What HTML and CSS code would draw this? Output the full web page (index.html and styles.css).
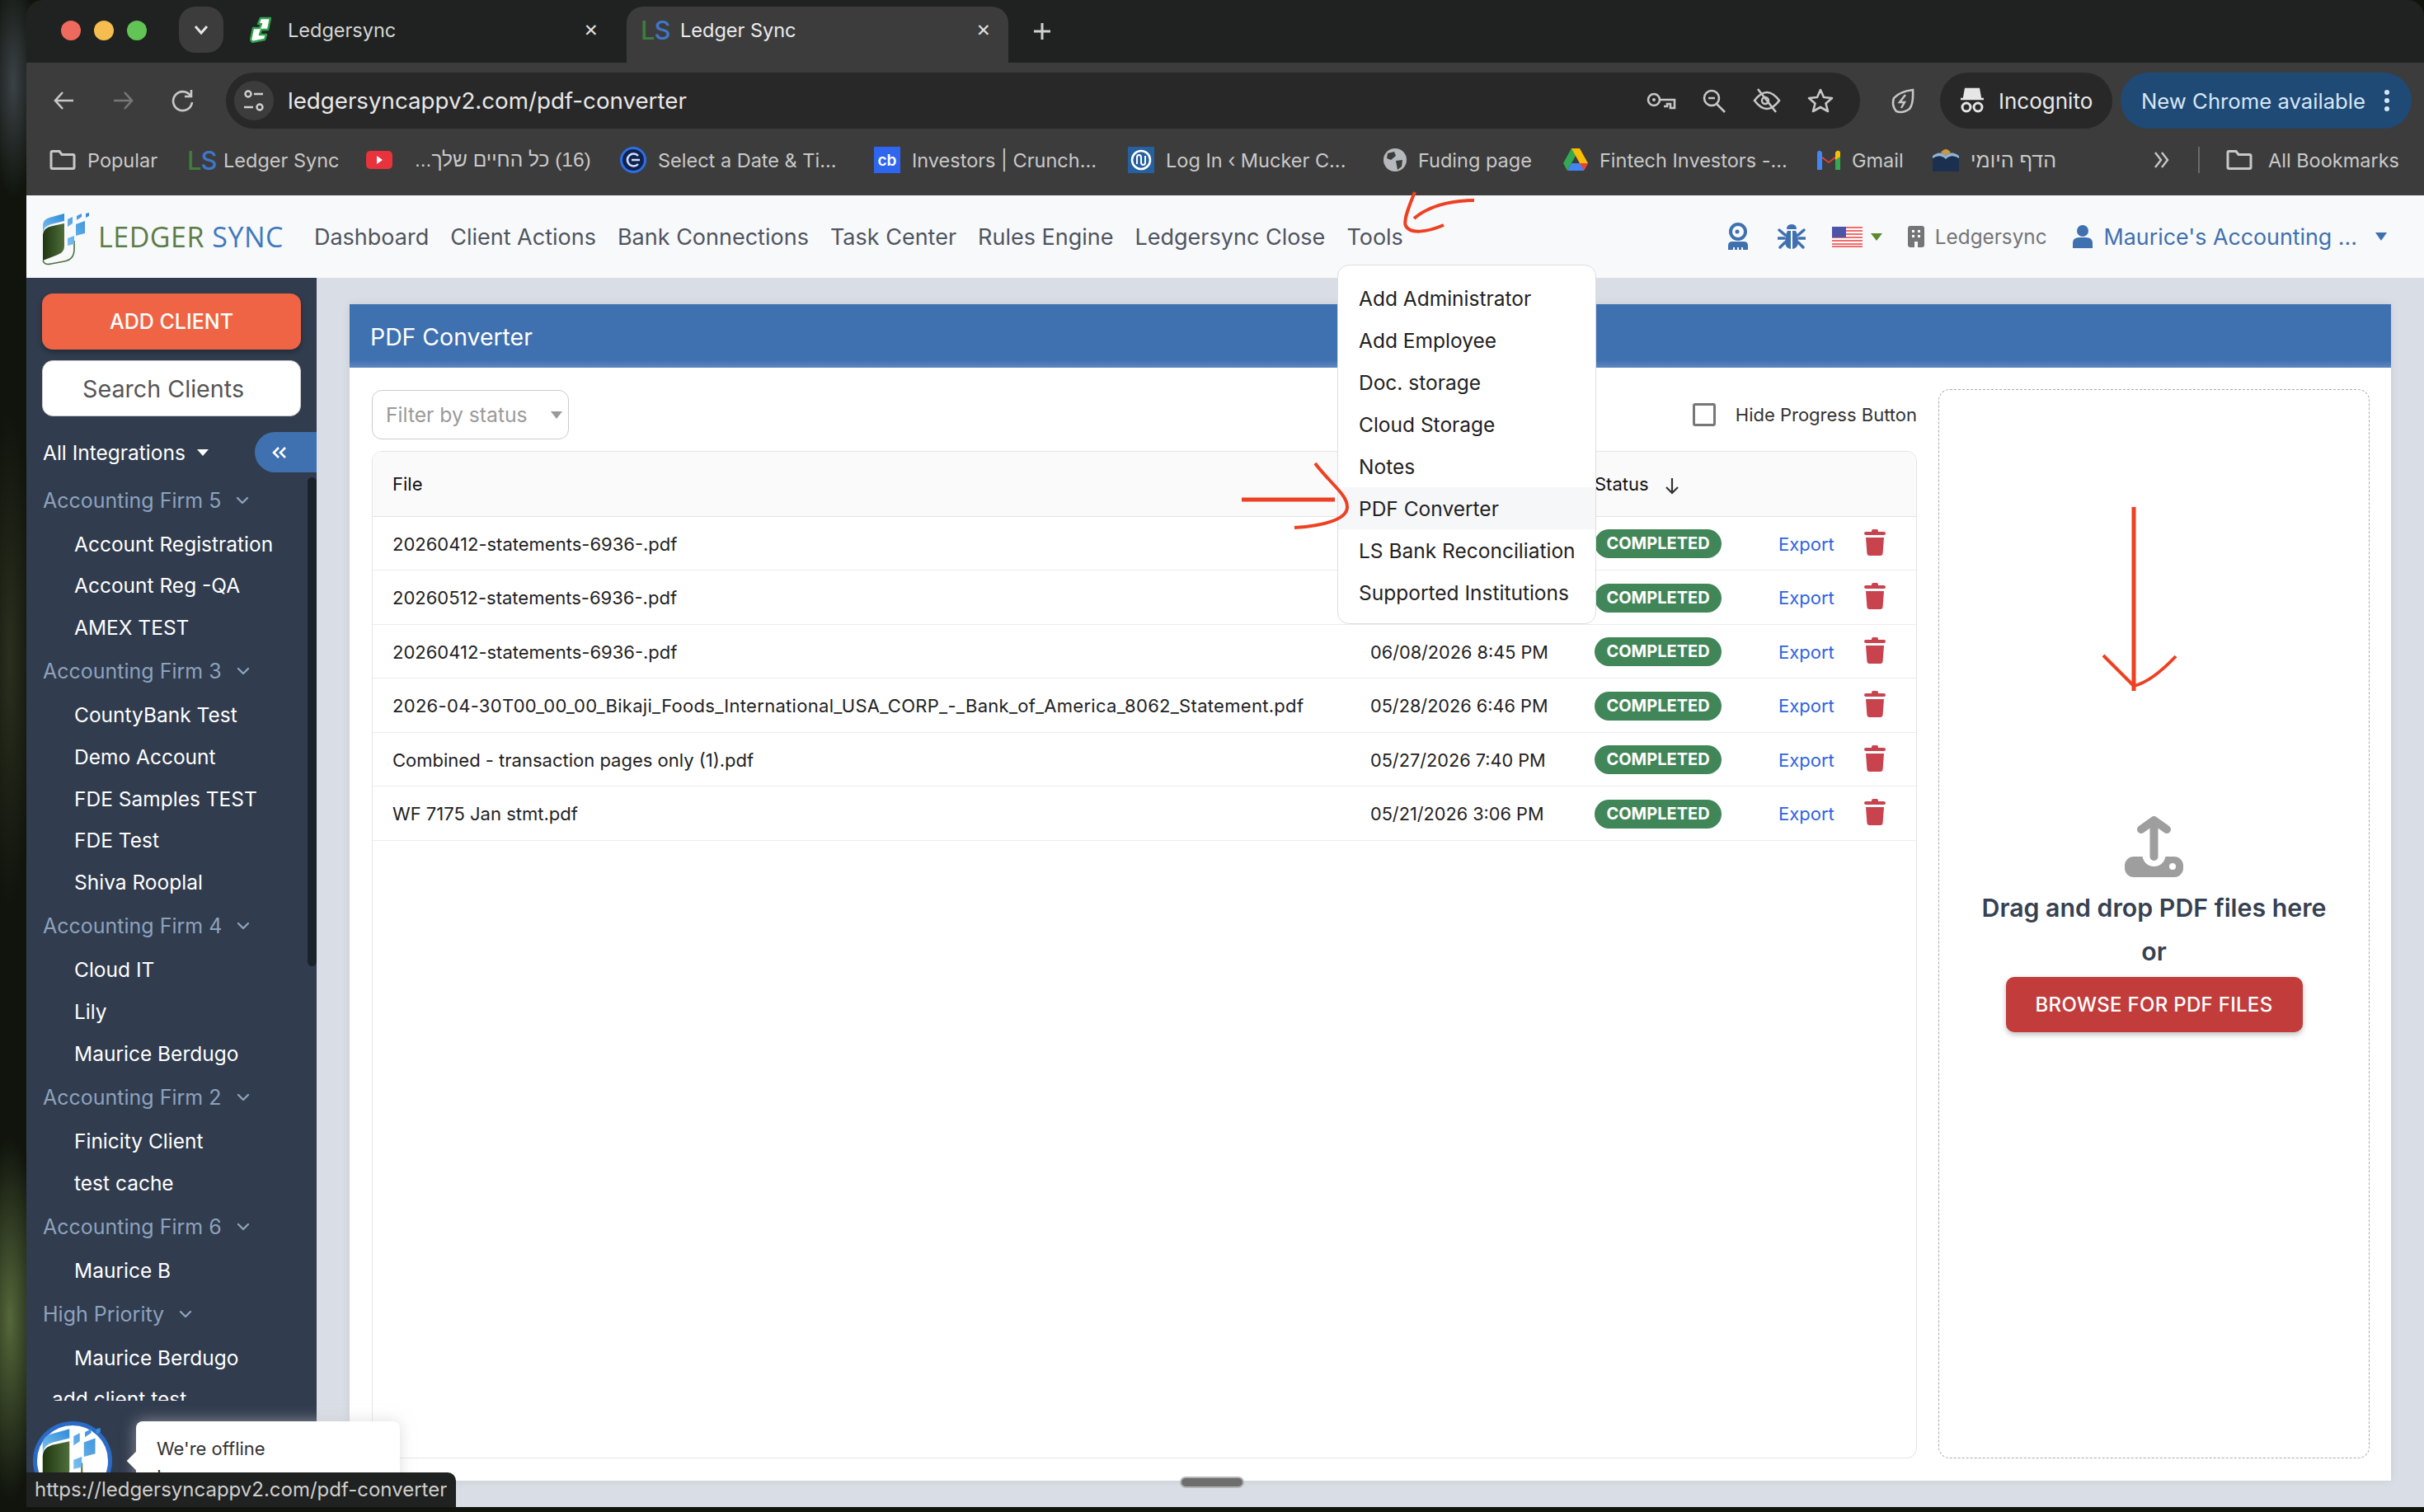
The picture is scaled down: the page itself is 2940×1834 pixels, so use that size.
FILE: index.html
```html
<!DOCTYPE html>
<html lang="en">
<head>
    <meta charset="UTF-8">
    <title>Ledger Sync - PDF Converter</title>
    <link rel="stylesheet" href="styles.css">
</head>
<body>

<svg class="defs" width="0" height="0">
    <defs>
        <linearGradient id="leaf" x1="0" x2="1" y1="0" y2="0">
            <stop offset="0" stop-color="#1f3610"/>
            <stop offset="1" stop-color="#4f6f3c"/>
        </linearGradient>
        <linearGradient id="sky" x1="0" x2="1" y1="1" y2="0">
            <stop offset="0" stop-color="#7cc0f0"/>
            <stop offset="1" stop-color="#2f8ad8"/>
        </linearGradient>
        <symbol id="logo" viewBox="0 0 62 64">
            <path d="M2 14 Q3 8 10 6 L28 1 V10 L12 14 Q4 16 2 24 Z" fill="url(#sky)"/>
            <path d="M2 58 V28 Q2 18 14 16 L28 13 V41 Q28 48 20 51 Z" fill="url(#leaf)"/>
            <path d="M2 58 Q4 64 12 62 L28 59 Q40 57 40 44 V34" fill="none" stroke="#4f6f3c" stroke-width="1.6"/>
            <path d="M32 8 L38 5 V13 L32 17 Z M43 4 L49 1 V5 L43 9 Z M54 1 L58 0 V4 L54 6 Z M42 14 L53 10 V25 L42 28 Z M32 31 L40 28 V38 L32 40 Z" fill="url(#sky)"/>
        </symbol>
        <symbol id="trash" viewBox="0 0 26 32">
            <path d="M9 2 Q9 0 11 0 H15 Q17 0 17 2 V3 H24 Q26 3 26 5 Q26 7 24 7 H2 Q0 7 0 5 Q0 3 2 3 H9 Z"/>
            <path d="M2 10 H24 L22.6 29 Q22.4 32 19.5 32 H6.5 Q3.6 32 3.4 29 Z"/>
        </symbol>
        <symbol id="folder" viewBox="0 0 32 24">
            <path d="M2 3 Q2 1.5 3.5 1.5 H12 L15 5.5 H28.5 Q30 5.5 30 7 V21 Q30 22.5 28.5 22.5 H3.5 Q2 22.5 2 21 Z" fill="none" stroke="#c7c7c7" stroke-width="3"/>
        </symbol>
        <symbol id="chevron" viewBox="0 0 16 10">
            <path d="M2 2 L8 8 L14 2" fill="none" stroke="#8da2bd" stroke-width="2.4" stroke-linecap="round" stroke-linejoin="round"/>
        </symbol>
    </defs>
</svg>

<div class="window">

    <div class="tabstrip">
        <span class="light red"></span>
        <span class="light yellow"></span>
        <span class="light green"></span>
        <div class="tabsearch">
            <svg width="20" height="14" viewBox="0 0 20 14"><path d="M3 3 L10 11 L17 3" fill="none" stroke="#e6e6e6" stroke-width="3"/></svg>
        </div>
        <div class="tab tab-first">
            <svg width="27" height="32" viewBox="0 0 27 32"><path d="M13 2 H25 L22 16 H14 L12 22 H20 L18 28 L3 31 L1 28 L4 14 H12 L14 9 H10 Z" fill="#fff" stroke="#2fa24f" stroke-width="2.4" stroke-linejoin="round"/></svg>
            <span class="tab-title">Ledgersync</span>
            <span class="tab-close">✕</span>
        </div>
        <div class="tab tab-active">
            <span class="ls-mark"><i>L</i><b>S</b></span>
            <span class="tab-title">Ledger Sync</span>
            <span class="tab-close">✕</span>
        </div>
        <svg class="newtab" width="24" height="24" viewBox="0 0 24 24"><path d="M12 2 V22 M2 12 H22" stroke="#d0d0d0" stroke-width="3"/></svg>
    </div>

    <div class="toolbar">
        <svg class="tool" width="32" height="32" viewBox="0 0 32 32"><path d="M27 16 H5 M14 6 L5 16 L14 26" fill="none" stroke="#c7c7c7" stroke-width="2.6"/></svg>
        <svg class="tool" width="32" height="32" viewBox="0 0 32 32"><path d="M5 16 H27 M18 6 L27 16 L18 26" fill="none" stroke="#777" stroke-width="2.6"/></svg>
        <svg class="tool" width="32" height="32" viewBox="0 0 32 32"><path d="M25 10 A11.5 11.5 0 1 0 27 18 M26 3 V11 H18" fill="none" stroke="#c7c7c7" stroke-width="2.6"/></svg>
        <div class="urlbar">
            <div class="urlchip">
                <svg width="28" height="32" viewBox="0 0 28 32"><circle cx="7" cy="8" r="3.5" fill="none" stroke="#d0d0d0" stroke-width="2.4"/><path d="M14 8 H25 M2 24 H13" stroke="#d0d0d0" stroke-width="2.4"/><circle cx="21" cy="24" r="3.5" fill="none" stroke="#d0d0d0" stroke-width="2.4"/></svg>
            </div>
            <span class="url">ledgersyncappv2.com/pdf-converter</span>
            <div class="urlicons">
                <svg width="36" height="24" viewBox="0 0 36 24"><circle cx="9" cy="11" r="7" fill="none" stroke="#c7c7c7" stroke-width="2.6"/><circle cx="9" cy="11" r="2" fill="#c7c7c7"/><path d="M16 11 H34 V21 H29 V16 H25 V19 H21" fill="none" stroke="#c7c7c7" stroke-width="2.6"/></svg>
                <svg width="30" height="30" viewBox="0 0 30 30"><circle cx="12" cy="12" r="9" fill="none" stroke="#c7c7c7" stroke-width="2.6"/><path d="M8 12 H16 M18 19 L28 29" stroke="#c7c7c7" stroke-width="2.6"/></svg>
                <svg width="36" height="32" viewBox="0 0 36 32"><path d="M3 16 Q18 -4 33 16 Q18 36 3 16 Z" fill="none" stroke="#c7c7c7" stroke-width="2.6"/><path d="M7 2 L29 30" stroke="#c7c7c7" stroke-width="2.6"/><circle cx="16" cy="16" r="4" fill="none" stroke="#c7c7c7" stroke-width="2.4"/></svg>
                <svg width="32" height="32" viewBox="0 0 32 32"><path d="M16 3 L20 12 L30 13 L22.5 19.5 L25 29 L16 24 L7 29 L9.5 19.5 L2 13 L12 12 Z" fill="none" stroke="#c7c7c7" stroke-width="2.6" stroke-linejoin="round"/></svg>
            </div>
        </div>
        <svg class="ext" width="32" height="32" viewBox="0 0 32 32"><path d="M28 3 Q29 20 24 26 Q16 32 8 29 Q2 22 5 13 Q12 5 28 3 Z" fill="none" stroke="#c7c7c7" stroke-width="2.6"/><path d="M19 9 L12 18 H18 L14 25" fill="none" stroke="#c7c7c7" stroke-width="2.4"/></svg>
        <div class="pill pill-dark">
            <svg width="30" height="32" viewBox="0 0 30 32"><path d="M7 2 H23 L25 13 H5 Z M1 14 H29" fill="#e6e6e6" stroke="#e6e6e6" stroke-width="2.4"/><circle cx="8" cy="24" r="5" fill="none" stroke="#e6e6e6" stroke-width="3"/><circle cx="22" cy="24" r="5" fill="none" stroke="#e6e6e6" stroke-width="3"/></svg>
            <span>Incognito</span>
        </div>
        <div class="pill pill-blue">
            <span>New Chrome available</span>
            <svg width="8" height="28" viewBox="0 0 8 28"><circle cx="4" cy="4" r="3" fill="#d6e6f7"/><circle cx="4" cy="14" r="3" fill="#d6e6f7"/><circle cx="4" cy="24" r="3" fill="#d6e6f7"/></svg>
        </div>
    </div>

    <div class="bookmarks">
        <div class="bm"><svg width="32" height="24"><use href="#folder"/></svg><span>Popular</span></div>
        <div class="bm"><span class="ls-mark"><i>L</i><b>S</b></span><span>Ledger Sync</span></div>
        <div class="bm">
            <svg width="32" height="22" viewBox="0 0 32 22"><rect width="32" height="22" rx="5" fill="#e8323c"/><path d="M13 6 L20 11 L13 16 Z" fill="#fff"/></svg>
            <span class="he he-yt" dir="rtl">(16) כל החיים שלך...</span>
        </div>
        <div class="bm">
            <svg width="32" height="32" viewBox="0 0 32 32"><circle cx="16" cy="16" r="14.5" fill="#10224e" stroke="#2c6fe8" stroke-width="3"/><path d="M22 11 A7.5 7.5 0 1 0 22 21 M14 16 H24" fill="none" stroke="#cfe0ff" stroke-width="2.6"/></svg>
            <span>Select a Date &amp; Ti...</span>
        </div>
        <div class="bm"><span class="cb-mark">cb</span><span>Investors | Crunch...</span></div>
        <div class="bm">
            <svg width="32" height="32" viewBox="0 0 32 32"><rect width="32" height="32" fill="#27609f"/><circle cx="16" cy="16" r="11" fill="none" stroke="#fff" stroke-width="2.6"/><path d="M11 21 V13 Q11 10 13.5 10 T16 13 V19 Q16 22 18.5 22 T21 19 V11" fill="none" stroke="#fff" stroke-width="2"/></svg>
            <span>Log In ‹ Mucker C...</span>
        </div>
        <div class="bm">
            <svg width="28" height="28" viewBox="0 0 28 28"><circle cx="14" cy="14" r="14" fill="#b5b8bc"/><path d="M5 6 L13 4 L15 9 L9 14 L4 12 Z M15 15 L23 14 L22 22 L17 26 Z" fill="#3c3c3c"/></svg>
            <span>Fuding page</span>
        </div>
        <div class="bm">
            <svg width="30" height="28" viewBox="0 0 30 28"><path d="M10 0 H20 L10 18 L5 27 L0 18 Z" fill="#34a853"/><path d="M10 0 H20 L30 18 H20 Z" fill="#fbbc04"/><path d="M5 27 L10 18 H30 L25 27 Z" fill="#4285f4"/><path d="M20 18 H30 L25 27 Z" fill="#ea4335"/></svg>
            <span>Fintech Investors -...</span>
        </div>
        <div class="bm">
            <svg width="28" height="24" viewBox="0 0 28 24"><path d="M0 3 L14 14 L28 3 V24 H22 V10 L14 16 L6 10 V24 H0 Z" fill="#ea4335"/><path d="M0 3 Q1 0 4 1 L6 3 V24 H0 Z" fill="#4285f4"/><path d="M22 3 L24 1 Q27 0 28 3 V24 H22 Z" fill="#34a853"/><path d="M22 3 L24 1 Q27 0 28 3 V8 L22 12 Z" fill="#fbbc04"/></svg>
            <span>Gmail</span>
        </div>
        <div class="bm">
            <svg width="32" height="28" viewBox="0 0 32 28"><rect y="8" width="32" height="20" fill="#1b2f4e"/><path d="M0 9 Q9 2 16 9 Q23 2 32 9 V12 Q23 6 16 13 Q9 6 0 12 Z" fill="#8fb4d8"/><path d="M10 5 Q16 -3 22 5 L16 9 Z" fill="#c69a4b"/></svg>
            <span class="he" dir="rtl">הדף היומי</span>
        </div>
        <svg class="more" width="20" height="24" viewBox="0 0 20 24"><path d="M3 3 L10 12 L3 21 M11 3 L18 12 L11 21" fill="none" stroke="#c7c7c7" stroke-width="2.4"/></svg>
        <span class="bm-sep"></span>
        <div class="bm bm-all"><svg width="32" height="24"><use href="#folder"/></svg><span>All Bookmarks</span></div>
    </div>

    <nav class="navbar">
        <svg class="nav-logo" width="62" height="64"><use href="#logo"/></svg>
        <div class="brand"><span class="brand-a">LEDGER</span> <span class="brand-b">SYNC</span></div>
        <div class="nav-links">
            <a>Dashboard</a>
            <a>Client Actions</a>
            <a>Bank Connections</a>
            <a>Task Center</a>
            <a>Rules Engine</a>
            <a>Ledgersync Close</a>
            <a>Tools</a>
        </div>
        <div class="nav-right">
            <svg width="26" height="34" viewBox="0 0 26 34"><circle cx="13" cy="11" r="9" fill="none" stroke="#3f70b0" stroke-width="4"/><circle cx="12" cy="11" r="2.5" fill="#3f70b0"/><path d="M1 33 V28 Q1 23 6 23 H20 Q25 23 25 28 V33 H19 V30 H17 V33 H14 V30 H12 V33 H9 V30 H7 V33 Z" fill="#3f70b0"/></svg>
            <svg class="nav-bug" width="34" height="32" viewBox="0 0 34 32"><path d="M11 7 Q11 1 17 1 Q23 1 23 7 Z M12 9 H16 V31 Q10 30 9 24 Q9 14 12 9 Z M18 9 H22 Q25 14 25 24 Q24 30 18 31 Z" fill="#3f70b0"/><path d="M9 14 L2 8 M8 18 H1 M9 23 L3 29 M25 14 L32 8 M26 18 H33 M25 23 L31 29" stroke="#3f70b0" stroke-width="3.4" stroke-linecap="round"/></svg>
            <div class="flag">
                <svg width="37" height="25" viewBox="0 0 37 25">
                    <rect width="37" height="25" fill="#fff"/>
                    <path d="M0 1 H37 M0 5 H37 M0 9 H37 M0 13 H37 M0 17 H37 M0 21 H37 M0 24 H37" stroke="#f26d6d" stroke-width="2"/>
                    <rect width="17" height="13" fill="#4c55a8"/>
                </svg>
                <span class="caret caret-green"></span>
            </div>
            <div class="org">
                <svg width="20" height="26" viewBox="0 0 20 26"><rect width="20" height="26" rx="3" fill="#757575"/><path d="M5 5 H8 V8 H5 Z M12 5 H15 V8 H12 Z M5 11 H8 V14 H5 Z M12 11 H15 V14 H12 Z M8 19 H12 V26 H8 Z" fill="#f8f9fb"/></svg>
                <span>Ledgersync</span>
            </div>
            <div class="account">
                <svg width="24" height="28" viewBox="0 0 24 28"><circle cx="12" cy="7" r="7" fill="#3f70b0"/><path d="M0 28 V22 Q0 15 8 15 H16 Q24 15 24 22 V28 Z" fill="#3f70b0"/></svg>
                <span>Maurice's Accounting ...</span>
                <span class="caret caret-blue"></span>
            </div>
        </div>
    </nav>

    <div class="app">
        <aside class="sidebar">
            <button class="add-client">ADD CLIENT</button>
            <div class="search-clients">Search Clients</div>
            <div class="integrations">
                <span>All Integrations</span>
                <span class="caret caret-white"></span>
                <div class="collapse">
                    <svg width="20" height="16" viewBox="0 0 20 16"><path d="M9 2 L3 8 L9 14 M17 2 L11 8 L17 14" fill="none" stroke="#fff" stroke-width="2.6"/></svg>
                </div>
            </div>
            <div class="client-list">
                <div class="firm">Accounting Firm 5 <svg width="16" height="10"><use href="#chevron"/></svg></div>
                <div class="client">Account Registration</div>
                <div class="client">Account Reg -QA</div>
                <div class="client">AMEX TEST</div>
                <div class="firm">Accounting Firm 3 <svg width="16" height="10"><use href="#chevron"/></svg></div>
                <div class="client">CountyBank Test</div>
                <div class="client">Demo Account</div>
                <div class="client">FDE Samples TEST</div>
                <div class="client">FDE Test</div>
                <div class="client">Shiva Rooplal</div>
                <div class="firm">Accounting Firm 4 <svg width="16" height="10"><use href="#chevron"/></svg></div>
                <div class="client">Cloud IT</div>
                <div class="client">Lily</div>
                <div class="client">Maurice Berdugo</div>
                <div class="firm">Accounting Firm 2 <svg width="16" height="10"><use href="#chevron"/></svg></div>
                <div class="client">Finicity Client</div>
                <div class="client">test cache</div>
                <div class="firm">Accounting Firm 6 <svg width="16" height="10"><use href="#chevron"/></svg></div>
                <div class="client">Maurice B</div>
                <div class="firm">High Priority <svg width="16" height="10"><use href="#chevron"/></svg></div>
                <div class="client">Maurice Berdugo</div>
                <div class="client client-flat">add client test</div>
            </div>
            <div class="scroll-thumb"></div>
        </aside>

        <main class="main">
            <section class="card">
                <header class="card-head">PDF Converter</header>
                <div class="card-body">
                    <div class="files">
                        <div class="files-top">
                            <div class="filter">
                                <span>Filter by status</span>
                                <span class="caret caret-grey"></span>
                            </div>
                            <label class="hide-progress">
                                <span class="checkbox"></span>
                                Hide Progress Button
                            </label>
                        </div>
                        <div class="table-wrap">
                            <table class="file-table">
                                <colgroup>
                                    <col class="col-file">
                                    <col class="col-date">
                                    <col class="col-status">
                                    <col class="col-export">
                                    <col>
                                </colgroup>
                                <thead>
                                    <tr>
                                        <th>File</th>
                                        <th></th>
                                        <th>
                                            Status
                                            <svg class="sort" width="18" height="22" viewBox="0 0 18 22"><path d="M9 2 V20 M2 13 L9 20 L16 13" fill="none" stroke="#333" stroke-width="2.2"/></svg>
                                        </th>
                                        <th></th>
                                        <th></th>
                                    </tr>
                                </thead>
                                <tbody>
                                    <tr>
                                        <td>20260412-statements-6936-.pdf</td>
                                        <td></td>
                                        <td><span class="badge">COMPLETED</span></td>
                                        <td><a class="export">Export</a></td>
                                        <td><svg class="trash" width="26" height="32"><use href="#trash"/></svg></td>
                                    </tr>
                                    <tr>
                                        <td>20260512-statements-6936-.pdf</td>
                                        <td></td>
                                        <td><span class="badge">COMPLETED</span></td>
                                        <td><a class="export">Export</a></td>
                                        <td><svg class="trash" width="26" height="32"><use href="#trash"/></svg></td>
                                    </tr>
                                    <tr>
                                        <td>20260412-statements-6936-.pdf</td>
                                        <td class="date">06/08/2026 8:45 PM</td>
                                        <td><span class="badge">COMPLETED</span></td>
                                        <td><a class="export">Export</a></td>
                                        <td><svg class="trash" width="26" height="32"><use href="#trash"/></svg></td>
                                    </tr>
                                    <tr>
                                        <td class="long-name">2026-04-30T00_00_00_Bikaji_Foods_International_USA_CORP_-_Bank_of_America_8062_Statement.pdf</td>
                                        <td class="date">05/28/2026 6:46 PM</td>
                                        <td><span class="badge">COMPLETED</span></td>
                                        <td><a class="export">Export</a></td>
                                        <td><svg class="trash" width="26" height="32"><use href="#trash"/></svg></td>
                                    </tr>
                                    <tr>
                                        <td>Combined - transaction pages only (1).pdf</td>
                                        <td class="date">05/27/2026 7:40 PM</td>
                                        <td><span class="badge">COMPLETED</span></td>
                                        <td><a class="export">Export</a></td>
                                        <td><svg class="trash" width="26" height="32"><use href="#trash"/></svg></td>
                                    </tr>
                                    <tr>
                                        <td>WF 7175 Jan stmt.pdf</td>
                                        <td class="date">05/21/2026 3:06 PM</td>
                                        <td><span class="badge">COMPLETED</span></td>
                                        <td><a class="export">Export</a></td>
                                        <td><svg class="trash" width="26" height="32"><use href="#trash"/></svg></td>
                                    </tr>
                                </tbody>
                            </table>
                        </div>
                    </div>
                    <div class="dropzone">
                        <svg class="upload" width="71" height="75" viewBox="0 0 71 75">
                            <rect y="50" width="71" height="25" rx="11" fill="#9e9e9e"/>
                            <circle cx="35.5" cy="48" r="14" fill="#fff"/>
                            <path d="M35.5 50 V6 M20 17 L35.5 6 L51 17" fill="none" stroke="#9e9e9e" stroke-width="10" stroke-linecap="round" stroke-linejoin="round"/>
                            <circle cx="58" cy="62" r="4" fill="#fff"/>
                        </svg>
                        <p class="drop-title">Drag and drop PDF files here</p>
                        <p class="drop-or">or</p>
                        <button class="browse">BROWSE FOR PDF FILES</button>
                    </div>
                </div>
            </section>
        </main>
    </div>

    <ul class="tools-menu">
        <li>Add Administrator</li>
        <li>Add Employee</li>
        <li>Doc. storage</li>
        <li>Cloud Storage</li>
        <li>Notes</li>
        <li class="current">PDF Converter</li>
        <li>LS Bank Reconciliation</li>
        <li>Supported Institutions</li>
    </ul>

    <div class="chat-bubble">
        <svg width="78" height="80"><use href="#logo"/></svg>
    </div>
    <div class="chat-note">
        <p>We're offline</p>
        <p>Leave a message</p>
    </div>
    <div class="status-link">https://ledgersyncappv2.com/pdf-converter</div>
    <div class="resize-handle"></div>
</div>

<!-- red marks drawn on top of the screenshot -->
<svg class="marks" width="2940" height="1834" viewBox="0 0 2940 1834">
    <g fill="none" stroke="#ee4022" stroke-width="4">
        <path d="M1716 233 C1708 252 1702 268 1705 274 C1710 284 1730 282 1751 273"/>
        <path d="M1715 265 C1730 252 1755 243 1788 243"/>
        <path d="M1506 606 H1619" stroke-width="5"/>
        <path d="M1595 562 C1615 588 1634 600 1634 615 C1634 630 1605 638 1570 640"/>
        <path d="M2588 615 V838" stroke-width="5"/>
        <path d="M2551 795 L2588 832 C2605 828 2622 814 2639 796"/>
    </g>
</svg>

</body>
</html>
```

FILE: styles.css
```css
* {
    box-sizing: border-box;
}
html, body {
    margin: 0;
    height: 100%;
}
body {
    position: relative;
    width: 2940px;
    height: 1834px;
    overflow: hidden;
    font-family: Inter, "Liberation Sans", sans-serif;
    background-color: #10140d;
    background-image:
        radial-gradient(ellipse 40px 220px at 12px 1600px, #55683a, transparent),
        radial-gradient(ellipse 30px 140px at 16px 100px, #3b4247, transparent),
        radial-gradient(ellipse 30px 300px at 12px 800px, #2a2f1e, transparent);
}
.defs {
    position: absolute;
}
.marks {
    position: absolute;
    top: 0;
    left: 0;
    pointer-events: none;
}
.window {
    position: relative;
    display: flex;
    flex-direction: column;
    width: 2908px;
    height: 1828px;
    margin-left: 32px;
    border-radius: 20px 20px 0 0;
    overflow: hidden;
    background-color: #202221;
}

/* browser chrome */
.tabstrip {
    display: flex;
    align-items: flex-end;
    height: 76px;
    padding-left: 42px;
}
.light {
    width: 24px;
    height: 24px;
    margin: 0 16px 27px 0;
    border-radius: 50%;
}
.red { background-color: #ee6a5f; }
.yellow { background-color: #f5bd4f; }
.green { background-color: #61c454; }
.tabsearch {
    display: flex;
    align-items: center;
    justify-content: center;
    width: 54px;
    height: 56px;
    margin: 0 14px 12px 23px;
    border-radius: 20px;
    background-color: #3c3c3c;
}
.tab {
    display: flex;
    align-items: center;
    height: 68px;
    padding-bottom: 12px;
    color: #d6d6d6;
    font-size: 23.5px;
}
.tab-first {
    width: 475px;
    padding-left: 18px;
}
.tab-first .tab-title {
    margin-left: 19px;
}
.tab-first .tab-close {
    margin-right: 34px;
}
.tab-active {
    width: 463px;
    padding-left: 17px;
    border-radius: 20px 20px 0 0;
    background-color: #3c3c3c;
    color: #ececec;
}
.tab-active .tab-title {
    margin-left: 18px;
}
.tab-close {
    margin-left: auto;
    margin-right: 21px;
    font-size: 21px;
    color: #e0e0e0;
}
.newtab {
    margin: 0 0 26px 29px;
}
.ls-mark {
    display: inline-flex;
    width: 30px;
    font-size: 31px;
    line-height: 1;
    font-weight: 500;
    letter-spacing: -1px;
}
.ls-mark i {
    font-style: normal;
    color: #3f7d3c;
}
.ls-mark b {
    font-weight: 500;
    color: #3f77c8;
}
.toolbar {
    display: flex;
    align-items: center;
    height: 80px;
    padding: 12px 0 0 30px;
    background-color: #3c3c3c;
}
.tool {
    flex: none;
    margin-right: 39px;
}
.tool:nth-child(2) {
    margin-right: 41px;
}
.tool:nth-child(3) {
    margin-right: 36px;
}
.urlbar {
    display: flex;
    align-items: center;
    flex: none;
    width: 1982px;
    height: 68px;
    padding-left: 10px;
    border-radius: 34px;
    background-color: #282828;
}
.urlchip {
    display: flex;
    align-items: center;
    justify-content: center;
    width: 48px;
    height: 48px;
    border-radius: 50%;
    background-color: #3c3c3c;
}
.url {
    margin-left: 17px;
    font-size: 27.7px;
    color: #e8e8e8;
}
.urlicons {
    display: flex;
    align-items: center;
    gap: 31px;
    margin-left: auto;
    padding-right: 32px;
}
.ext {
    flex: none;
    margin-left: 36px;
}
.pill {
    display: flex;
    align-items: center;
    flex: none;
    height: 68px;
    border-radius: 34px;
    font-size: 26px;
}
.pill-dark {
    width: 209px;
    margin-left: 29px;
    padding-left: 24px;
    gap: 17px;
    background-color: #282828;
    color: #e8e8e8;
}
.pill-blue {
    width: 353px;
    margin-left: 10px;
    padding-left: 25px;
    gap: 22px;
    background-color: #1f4a75;
    color: #d6e6f7;
    font-size: 25.7px;
}
.bookmarks {
    display: grid;
    grid-template-columns: 167px 217px 308px 308px 308px 310px 218px 308px 140px 252px 50px 54px auto;
    align-items: center;
    height: 81px;
    padding: 0 0 5px 28px;
    background-color: #3c3c3c;
    font-size: 23.5px;
    color: #c9c9c9;
}
.bm {
    display: flex;
    align-items: center;
    gap: 14px;
    white-space: nowrap;
}
.bm-all {
    gap: 19px;
}
.bm .he {
    font-family: "Liberation Sans", sans-serif;
    font-size: 25px;
}
.bm .he-yt {
    margin-left: 13px;
    font-size: 24.5px;
}
.cb-mark {
    display: flex;
    align-items: center;
    justify-content: center;
    width: 32px;
    height: 32px;
    background-color: #2f66f0;
    color: #fff;
    font-size: 19px;
    font-weight: 600;
}
.more {
    justify-self: center;
}
.bm-sep {
    justify-self: start;
    width: 2px;
    height: 32px;
    margin-left: 20px;
    background-color: #6a6a6a;
}

/* app header */
.navbar {
    display: flex;
    align-items: center;
    height: 100px;
    padding-left: 18px;
    background-color: #f8f9fb;
}
.nav-logo {
    flex: none;
    margin-top: 6px;
}
.brand {
    margin-left: 7px;
    font-family: "Open Sans", sans-serif;
    font-size: 34px;
    letter-spacing: 0.5px;
    white-space: nowrap;
}
.brand-a { color: #5c7d47; }
.brand-b { color: #3f78bd; }
.nav-links {
    display: flex;
    gap: 26px;
    margin-left: 37px;
    font-size: 27px;
    color: #4f5560;
    white-space: nowrap;
}
.nav-right {
    display: flex;
    align-items: center;
    margin-left: auto;
    padding-right: 45px;
    font-size: 24.3px;
    white-space: nowrap;
}
.nav-bug {
    margin-left: 35px;
}
.flag {
    display: flex;
    align-items: center;
    gap: 10px;
    margin-left: 32px;
}
.org {
    display: flex;
    align-items: center;
    gap: 13px;
    margin-left: 31px;
    color: #757575;
}
.account {
    display: flex;
    align-items: center;
    gap: 14px;
    margin-left: 31px;
    font-size: 26.8px;
    color: #3f70b0;
}
.account .caret {
    margin-left: 8px;
}
.caret {
    display: inline-block;
    width: 0;
    height: 0;
    border-left: 7px solid transparent;
    border-right: 7px solid transparent;
}
.caret-green { border-top: 9px solid #5c8a2e; }
.caret-blue { border-top: 10px solid #3f70b0; }
.caret-white { border-top: 8px solid #fff; }
.caret-grey { border-top: 9px solid #9a9a9a; }

/* sidebar */
.app {
    display: flex;
    flex: 1;
    min-height: 0;
}
.sidebar {
    position: relative;
    flex: none;
    width: 352px;
    padding-top: 19px;
    background-color: #313c4e;
}
.add-client {
    display: block;
    width: 314px;
    height: 68px;
    margin-left: 19px;
    border: none;
    border-radius: 13px;
    background-color: #ee6444;
    box-shadow: 0 3px 6px rgba(0, 0, 0, 0.3);
    color: white;
    font-family: inherit;
    font-size: 25px;
    font-weight: 500;
}
.search-clients {
    display: flex;
    align-items: center;
    width: 314px;
    height: 68px;
    margin: 13px 0 19px 19px;
    padding-left: 48px;
    border: 1px solid #ccc;
    border-radius: 13px;
    background-color: white;
    color: #555;
    font-size: 28.7px;
}
.integrations {
    display: flex;
    align-items: center;
    height: 49px;
    padding-left: 20px;
    color: white;
    font-size: 24.5px;
}
.integrations .caret {
    margin-left: 14px;
}
.collapse {
    display: flex;
    align-items: center;
    justify-content: center;
    width: 75px;
    height: 49px;
    margin-left: auto;
    padding-right: 16px;
    border-radius: 25px 0 0 25px;
    background-color: #3f70b0;
}
.client-list {
    height: 1120px;
    margin-top: 6px;
    overflow: hidden;
    font-size: 24.5px;
}
.firm {
    display: flex;
    align-items: center;
    gap: 18px;
    height: 55.3px;
    padding-left: 20px;
    font-size: 25px;
    color: #8da2bd;
}
.client {
    display: flex;
    align-items: center;
    height: 50.75px;
    padding-left: 58px;
    color: white;
}
.client-flat {
    padding-left: 31px;
}
.scroll-thumb {
    position: absolute;
    top: 242px;
    right: 0;
    width: 11px;
    height: 593px;
    border-radius: 6px;
    background-color: #1a222c;
}

/* main card */
.main {
    flex: 1;
    min-width: 0;
    padding: 32px 40px;
    background-color: #d9dde5;
}
.card {
    display: flex;
    flex-direction: column;
    height: 100%;
    background-color: white;
    box-shadow: 0 0 10px rgba(0, 0, 0, 0.08);
}
.card-head {
    display: flex;
    align-items: center;
    flex: none;
    height: 77px;
    padding: 2px 0 0 25px;
    background: linear-gradient(#3f70b0 88%, #5f88be);
    color: white;
    font-size: 28.4px;
}
.card-body {
    display: flex;
    flex: 1;
    gap: 26px;
    min-height: 0;
    padding: 26px 26px 27px 27px;
}
.files {
    display: flex;
    flex-direction: column;
    flex: none;
    width: 1874px;
}
.files-top {
    display: flex;
    align-items: center;
    flex: none;
    height: 60px;
    margin: 1px 0 14px;
}
.filter {
    display: flex;
    align-items: center;
    justify-content: space-between;
    width: 239px;
    height: 60px;
    padding: 0 7px 0 16px;
    border: 1px solid #ccc;
    border-radius: 12px;
    color: #9a9a9a;
    font-size: 24.7px;
}
.hide-progress {
    display: flex;
    align-items: center;
    gap: 24px;
    margin: 0 0 1px auto;
    font-size: 22px;
    color: #333;
}
.checkbox {
    width: 28px;
    height: 28px;
    border: 3px solid #777;
    border-radius: 3px;
}
.table-wrap {
    flex: 1;
    border: 1px solid #e4e4e4;
    border-radius: 12px;
    overflow: hidden;
}
.file-table {
    width: 100%;
    table-layout: fixed;
    border-collapse: collapse;
    font-size: 22px;
    color: #222;
}
.col-file { width: 1186px; }
.col-date { width: 272px; }
.col-status { width: 223px; }
.col-export { width: 117px; }
.file-table th {
    height: 78px;
    padding: 0 0 0 24px;
    border-bottom: 1px solid #e4e4e4;
    background-color: #fafafa;
    text-align: left;
    font-weight: 400;
    color: #111;
    white-space: nowrap;
}
.file-table td {
    height: 65.5px;
    padding: 2px 0 0 24px;
    border-bottom: 1px solid #ececec;
    white-space: nowrap;
}
.file-table td:last-child {
    padding-left: 11px;
}
.file-table .date {
    font-size: 21.7px;
}
.file-table .long-name {
    letter-spacing: 0.3px;
}
.sort {
    margin-left: 13px;
    vertical-align: middle;
}
.badge {
    display: inline-block;
    width: 154px;
    height: 35px;
    border-radius: 18px;
    background-color: #418659;
    color: white;
    font-size: 20px;
    font-weight: 700;
    line-height: 35px;
    text-align: center;
    vertical-align: middle;
}
.export {
    color: #2f64e0;
}
.trash {
    display: block;
    margin-top: -4px;
    fill: #c9434e;
}

/* upload box */
.dropzone {
    display: flex;
    flex-direction: column;
    align-items: center;
    justify-content: center;
    flex: none;
    width: 523px;
    border: 1px dashed #aaa;
    border-radius: 14px;
}
.upload {
    flex: none;
}
.drop-title {
    margin: 17px 0 0;
    color: #374151;
    font-size: 30.3px;
    font-weight: 600;
    line-height: 40px;
}
.drop-or {
    margin: 13px 0 0;
    color: #374151;
    font-size: 30.3px;
    font-weight: 600;
    line-height: 40px;
}
.browse {
    width: 360px;
    height: 67px;
    margin-top: 11px;
    border: none;
    border-radius: 10px;
    background-color: #c13c3a;
    box-shadow: 0 3px 6px rgba(0, 0, 0, 0.25);
    color: white;
    font-family: inherit;
    font-size: 24px;
    font-weight: 500;
    letter-spacing: 0.3px;
}

/* overlays */
.tools-menu {
    position: absolute;
    top: 321px;
    left: 1590px;
    width: 314px;
    height: 436px;
    margin: 0;
    padding: 14px 0 0;
    list-style: none;
    border: 1px solid #dedede;
    border-radius: 14px;
    background-color: white;
    font-size: 24.5px;
    color: #222;
}
.tools-menu li {
    display: flex;
    align-items: center;
    height: 51px;
    padding-left: 25px;
    white-space: nowrap;
}
.tools-menu .current {
    background-color: #f6f7f9;
}
.chat-bubble {
    position: absolute;
    top: 1724px;
    left: 8px;
    display: flex;
    align-items: center;
    justify-content: center;
    width: 96px;
    height: 96px;
    border: 5px solid #2a6bc8;
    border-radius: 50%;
    background-color: white;
}
.chat-note {
    position: absolute;
    top: 1724px;
    left: 133px;
    width: 320px;
    height: 96px;
    padding: 20px 25px;
    border-radius: 8px;
    background-color: white;
    box-shadow: 0 0 18px rgba(200, 200, 200, 0.6);
    color: #333;
    font-size: 22px;
}
.chat-note p {
    margin: 0 0 8px;
}
.chat-note::before {
    content: "";
    position: absolute;
    top: 40px;
    left: -8px;
    width: 16px;
    height: 16px;
    background-color: white;
    transform: rotate(45deg);
}
.status-link {
    position: absolute;
    left: 0;
    bottom: 0;
    width: 521px;
    height: 42px;
    padding-left: 10px;
    border-radius: 0 10px 0 0;
    background-color: #202221;
    color: #cfcfcf;
    font-size: 24px;
    line-height: 42px;
    white-space: nowrap;
}
.resize-handle {
    position: absolute;
    top: 1791px;
    left: 1399px;
    width: 78px;
    height: 14px;
    border: 2px solid #b5b5b5;
    border-radius: 7px;
    background-color: #6e6e6e;
}
```
